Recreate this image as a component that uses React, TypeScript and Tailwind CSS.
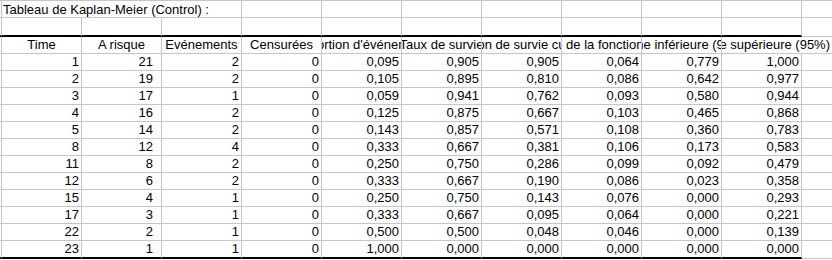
import React from "react";

const rows: string[][] = [
  ["1", "21", "2", "0", "0,095", "0,905", "0,905", "0,064", "0,779", "1,000"],
  ["2", "19", "2", "0", "0,105", "0,895", "0,810", "0,086", "0,642", "0,977"],
  ["3", "17", "1", "0", "0,059", "0,941", "0,762", "0,093", "0,580", "0,944"],
  ["4", "16", "2", "0", "0,125", "0,875", "0,667", "0,103", "0,465", "0,868"],
  ["5", "14", "2", "0", "0,143", "0,857", "0,571", "0,108", "0,360", "0,783"],
  ["8", "12", "4", "0", "0,333", "0,667", "0,381", "0,106", "0,173", "0,583"],
  ["11", "8", "2", "0", "0,250", "0,750", "0,286", "0,099", "0,092", "0,479"],
  ["12", "6", "2", "0", "0,333", "0,667", "0,190", "0,086", "0,023", "0,358"],
  ["15", "4", "1", "0", "0,250", "0,750", "0,143", "0,076", "0,000", "0,293"],
  ["17", "3", "1", "0", "0,333", "0,667", "0,095", "0,064", "0,000", "0,221"],
  ["22", "2", "1", "0", "0,500", "0,500", "0,048", "0,046", "0,000", "0,139"],
  ["23", "1", "1", "0", "1,000", "0,000", "0,000", "0,000", "0,000", "0,000"],
];

const headers = [
  "Time",
  "A risque",
  "Evénements",
  "Censurées",
  "Proportion d'événements",
  "Taux de survie",
  "Fonction de survie cumulée",
  "Ecart-type de la fonction de survie",
  "Borne inférieure (95%)",
];

const G = "border-[#c6c6c6]";

export default function App() {
  return (
    <div
      className={`w-[832px] h-[260px] bg-white overflow-hidden text-[13px] leading-[16px] text-black border-t ${G}`}
      style={{ fontFamily: '"Liberation Sans", Arial, sans-serif' }}
    >
      {/* Row 1: title */}
      <div className={`flex h-[17px] border-b ${G}`}>
        <div className={`w-[2px] shrink-0 border-r ${G}`} />
        <div className={`w-[240px] shrink-0 border-r ${G} pl-[1px] pt-[1px] leading-[15px] whitespace-nowrap`}>
          Tableau de Kaplan-Meier (Control) :
        </div>
        {Array.from({ length: 7 }).map((_, i) => (
          <div key={i} className={`w-[80px] shrink-0 border-r ${G}`} />
        ))}
        <div className="flex-1" />
      </div>

      {/* Row 2: empty, black bottom border */}
      <div className="flex h-[19px]">
        <div className={`w-[2px] shrink-0 border-r ${G} border-b-2 border-b-black`} />
        {Array.from({ length: 10 }).map((_, i) => (
          <div key={i} className={`w-[80px] shrink-0 border-r ${G} border-b-2 border-b-black`} />
        ))}
        <div className={`flex-1 border-b ${G}`} />
      </div>

      {/* Header row */}
      <div className={`flex h-[17px] border-b ${G}`}>
        <div className={`w-[2px] shrink-0 border-r ${G}`} />
        {headers.map((h, i) => (
          <div
            key={i}
            className={`w-[80px] shrink-0 border-r ${G} flex justify-center overflow-hidden whitespace-nowrap`}
          >
            <span className="shrink-0">{h}</span>
          </div>
        ))}
        <div className="flex-1 overflow-hidden">
          <div className="w-[78px] flex justify-center whitespace-nowrap">
            <span className="shrink-0">Borne supérieure (95%)</span>
          </div>
        </div>
      </div>

      {/* Data rows */}
      {rows.map((r, ri) => {
        const last = ri === rows.length - 1;
        const bb = last ? "border-b-2 border-b-black" : "";
        return (
          <div key={ri} className={`flex ${last ? "h-[18px]" : `h-[17px] border-b ${G}`}`}>
            <div className={`w-[2px] shrink-0 border-r ${G} ${bb}`} />
            {r.map((v, ci) => (
              <div
                key={ci}
                className={`w-[80px] shrink-0 border-r ${G} ${bb} text-right whitespace-nowrap overflow-hidden ${
                  ci === 1 ? "pr-[8px]" : "pr-[2px]"
                }`}
              >
                {v}
              </div>
            ))}
            <div className={`flex-1 ${last ? `border-b ${G}` : ""}`} />
          </div>
        );
      })}
    </div>
  );
}
